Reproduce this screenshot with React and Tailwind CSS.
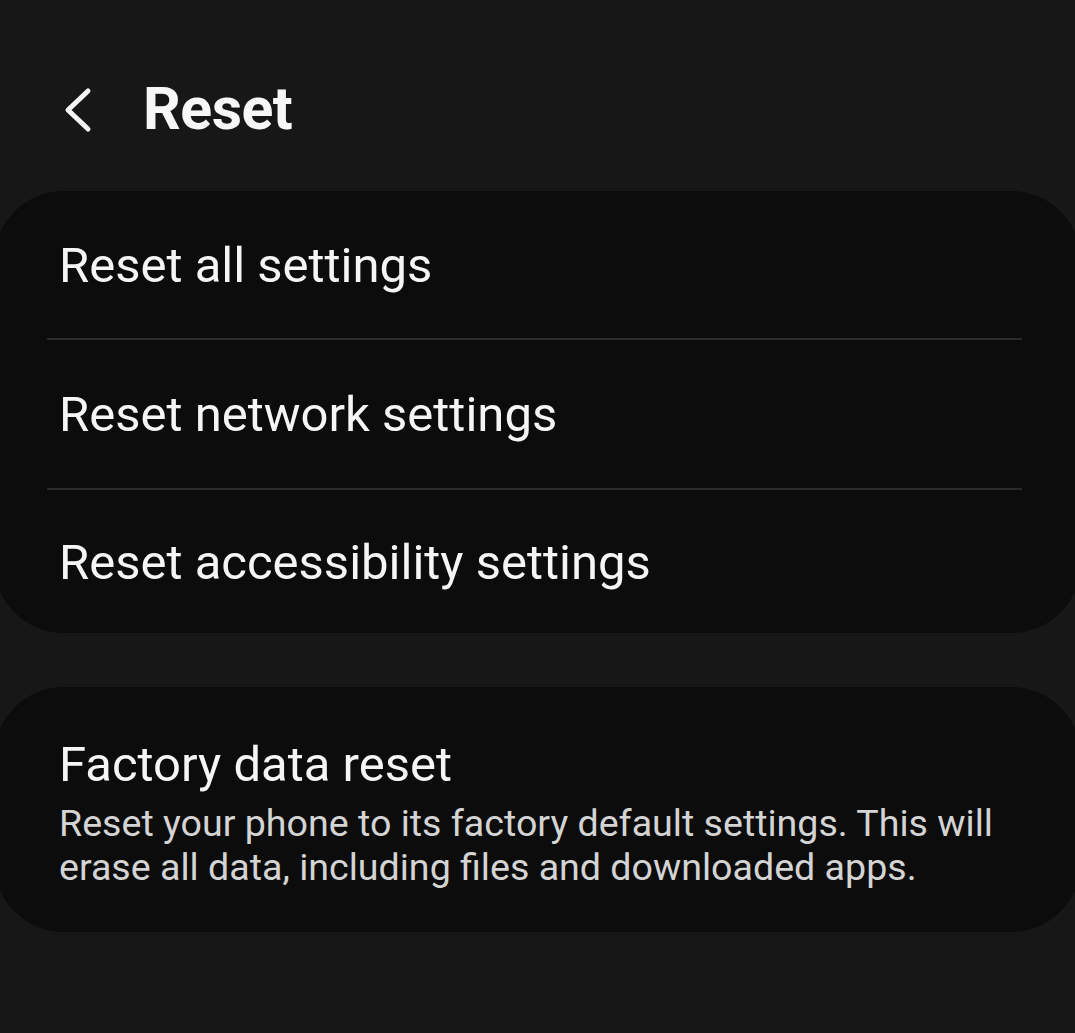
import React from "react";

const rows = [
  { label: "Reset all settings", h: "h-[147px]" },
  { label: "Reset network settings", h: "h-[148px]" },
  { label: "Reset accessibility settings", h: "h-[143px]" },
];

const App = () => {
  return (
    <div
      className="w-[1075px] h-[1033px] overflow-hidden bg-[#171717] text-white"
      style={{ fontFamily: "Roboto, 'Noto Sans', sans-serif" }}
    >
      {/* Header */}
      <div className="h-[191px] flex items-center pl-[60px] pt-[28px]">
        <svg width="34" height="46" viewBox="0 0 34 46">
          <path
            d="M28 4 L8 23 L28 42"
            fill="none"
            stroke="#f5f5f5"
            strokeWidth="5"
            strokeLinecap="round"
            strokeLinejoin="round"
          />
        </svg>
        <h1 className="ml-[49px] text-[59px] font-bold tracking-[-0.5px] text-[#f7f7f7]">Reset</h1>
      </div>

      {/* Reset options */}
      <div className="mx-[-6px] rounded-[70px] bg-[#0c0c0c]">
        {rows.map((row, i) => (
          <div key={row.label}>
            {i > 0 && <div className="ml-[53px] mr-[59px] h-[2px] bg-[#2a2a2a]" />}
            <div className={`${row.h} flex items-center pl-[65px] pt-[2px]`}>
              <span className="text-[49px] text-[#f5f5f5]">{row.label}</span>
            </div>
          </div>
        ))}
      </div>

      {/* Factory reset */}
      <div className="mx-[-6px] mt-[54px] rounded-[70px] bg-[#0c0c0c] h-[245px] pl-[65px] pr-[60px] pt-[49px]">
        <div className="text-[49px] leading-[58px] text-[#f5f5f5]">Factory data reset</div>
        <p className="mt-[7px] text-[37.6px] leading-[44px] text-[#d4d4d4] w-[960px]">
          Reset your phone to its factory default settings. This will erase all data, including files and
          downloaded apps.
        </p>
      </div>
    </div>
  );
};

export default App;
